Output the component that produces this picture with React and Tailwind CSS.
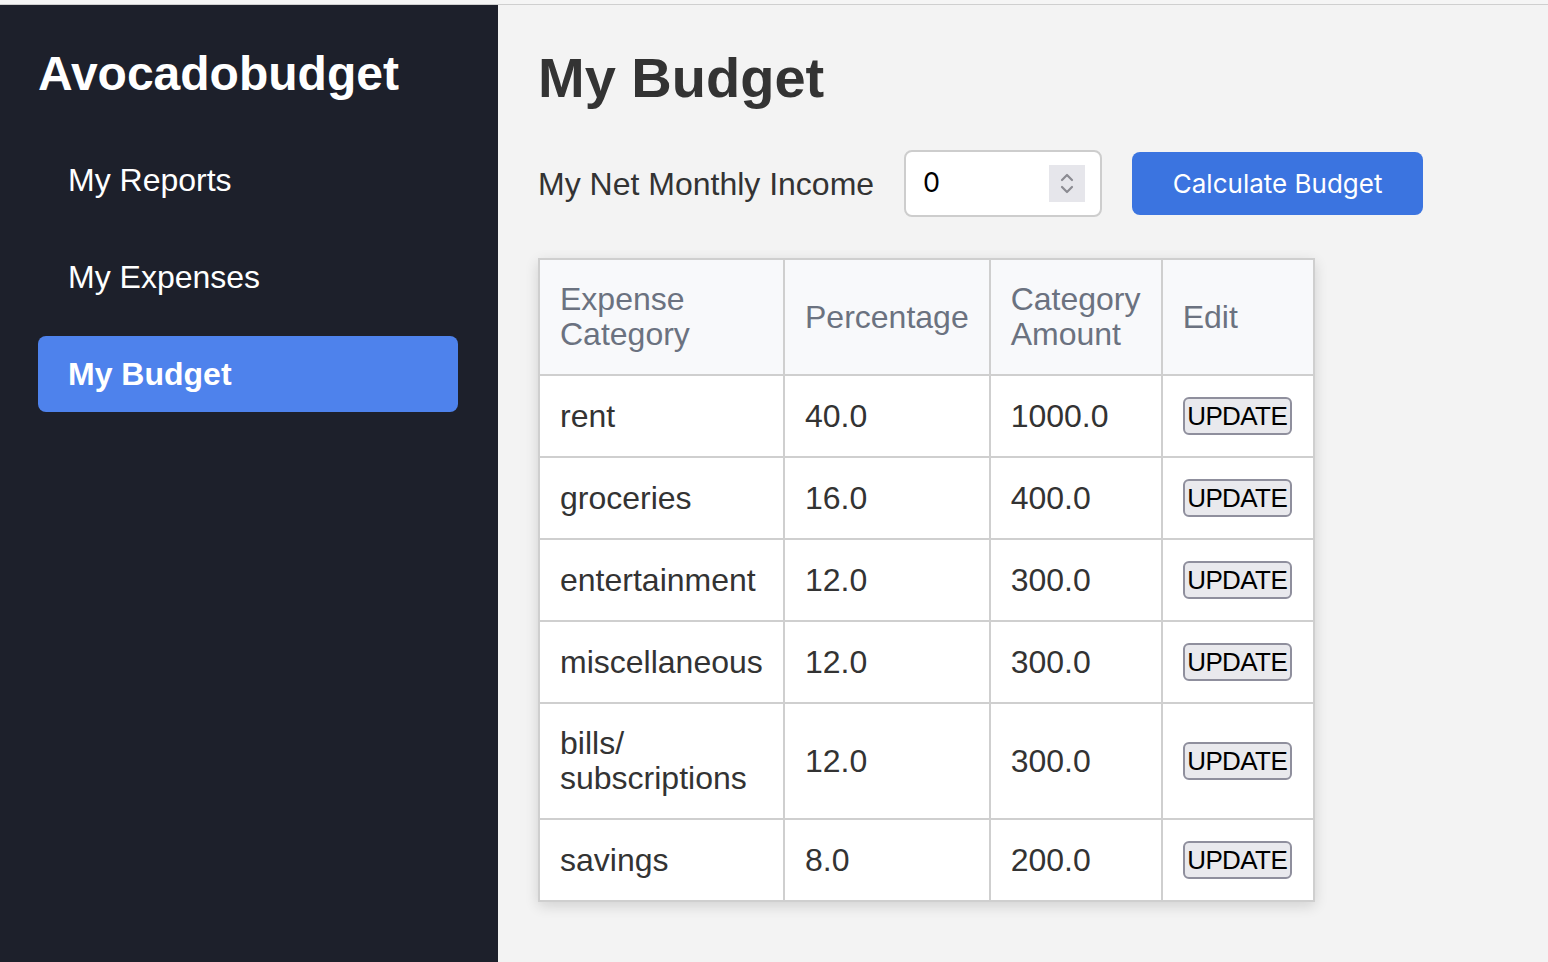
const rows = [
  { cat: 'rent', pct: '40.0', amt: '1000.0' },
  { cat: 'groceries', pct: '16.0', amt: '400.0' },
  { cat: 'entertainment', pct: '12.0', amt: '300.0' },
  { cat: 'miscellaneous', pct: '12.0', amt: '300.0' },
  { cat: 'bills/ subscriptions', pct: '12.0', amt: '300.0' },
  { cat: 'savings', pct: '8.0', amt: '200.0' },
];

const navItems = ['My Reports', 'My Expenses', 'My Budget'];

export default function App() {
  return (
    <div className="min-h-screen flex flex-col bg-[#f3f3f3] font-['Liberation_Sans',Arial,sans-serif]">
      <div className="h-[5px] shrink-0 bg-[#f5f5f5] border-b border-[#cfcfcf]"></div>
      <div className="flex flex-1 h-[957px]">
        {/* sidebar */}
        <aside className="w-[498px] shrink-0 bg-[#1d202b] pl-[38px] pr-[40px] pt-[41px]">
          <h1 className="text-[48px] font-bold text-white leading-[55px]">Avocadobudget</h1>
          <nav className="mt-[41px] flex flex-col gap-[21px]">
            {navItems.map(item => {
              const active = item === 'My Budget';
              return (
                <a
                  key={item}
                  href="#"
                  className={active
                    ? 'h-[76px] flex items-center px-[30px] rounded-lg bg-[#4e82ec] text-white text-[32px] font-bold'
                    : 'h-[76px] flex items-center px-[30px] rounded-lg text-white text-[32px]'}
                >
                  {item}
                </a>
              );
            })}
          </nav>
        </aside>

        {/* main */}
        <main className="flex-1 pl-[40px] pt-[41px]">
          <h2 className="text-[56px] font-bold text-[#333] leading-[64px]">My Budget</h2>

          <div className="mt-[40px] flex items-center">
            <label className="text-[32px] text-[#333]">My Net Monthly Income</label>
            <div className="ml-[30px] w-[198px] h-[67px] bg-white border-2 border-[#cdcdcd] rounded-lg flex items-center pl-[17px] pr-[15px]">
              <span className="flex-1 text-[27px] text-black font-['Inter',sans-serif]">0</span>
              <div className="w-[36px] h-[37px] bg-[#e6e6eb] flex flex-col items-center justify-center gap-[3px]">
                <svg width="16" height="10" viewBox="0 0 16 10" fill="none" stroke="#8b8b92" strokeWidth="2.2" strokeLinecap="round" strokeLinejoin="round">
                  <path d="M3 8 L8 3 L13 8" />
                </svg>
                <svg width="16" height="10" viewBox="0 0 16 10" fill="none" stroke="#8b8b92" strokeWidth="2.2" strokeLinecap="round" strokeLinejoin="round">
                  <path d="M3 2 L8 7 L13 2" />
                </svg>
              </div>
            </div>
            <button className="ml-[30px] w-[291px] h-[63px] bg-[#3b74e0] text-white rounded-lg text-[26px] font-['Inter',sans-serif]">
              Calculate Budget
            </button>
          </div>

          <div className="mt-[41px] w-fit shadow-[0_4px_14px_rgba(0,0,0,0.14)] rounded-[3px]">
            <table className="border-collapse table-fixed text-[32px] leading-[35px]">
              <thead>
                <tr className="bg-[#f8f9fb] text-[#6b7280]">
                  <th className="w-[245px] border-2 border-[#cfcfcf] px-[20px] py-[22px] text-left font-normal">Expense Category</th>
                  <th className="w-[205px] border-2 border-[#cfcfcf] px-[20px] py-[22px] text-left font-normal">Percentage</th>
                  <th className="w-[172px] border-2 border-[#cfcfcf] px-[20px] py-[22px] text-left font-normal">Category Amount</th>
                  <th className="w-[152px] border-2 border-[#cfcfcf] px-[20px] py-[22px] text-left font-normal">Edit</th>
                </tr>
              </thead>
              <tbody className="bg-white text-[#333]">
                {rows.map(r => (
                  <tr key={r.cat}>
                    <td className="border-2 border-[#cfcfcf] px-[20px] py-[22px]">{r.cat}</td>
                    <td className="border-2 border-[#cfcfcf] px-[20px] py-[22px]">{r.pct}</td>
                    <td className="border-2 border-[#cfcfcf] px-[20px] py-[22px]">{r.amt}</td>
                    <td className="border-2 border-[#cfcfcf] px-[20px] py-[22px]">
                      <button className="-my-[1px] h-[38px] w-[109px] bg-[#e9e9ed] border-2 border-[#8f8f9d] rounded-[6px] text-black text-[26px] leading-none tracking-[-0.6px] flex items-center justify-center">
                        UPDATE
                      </button>
                    </td>
                  </tr>
                ))}
              </tbody>
            </table>
          </div>
        </main>
      </div>
    </div>
  );
}
